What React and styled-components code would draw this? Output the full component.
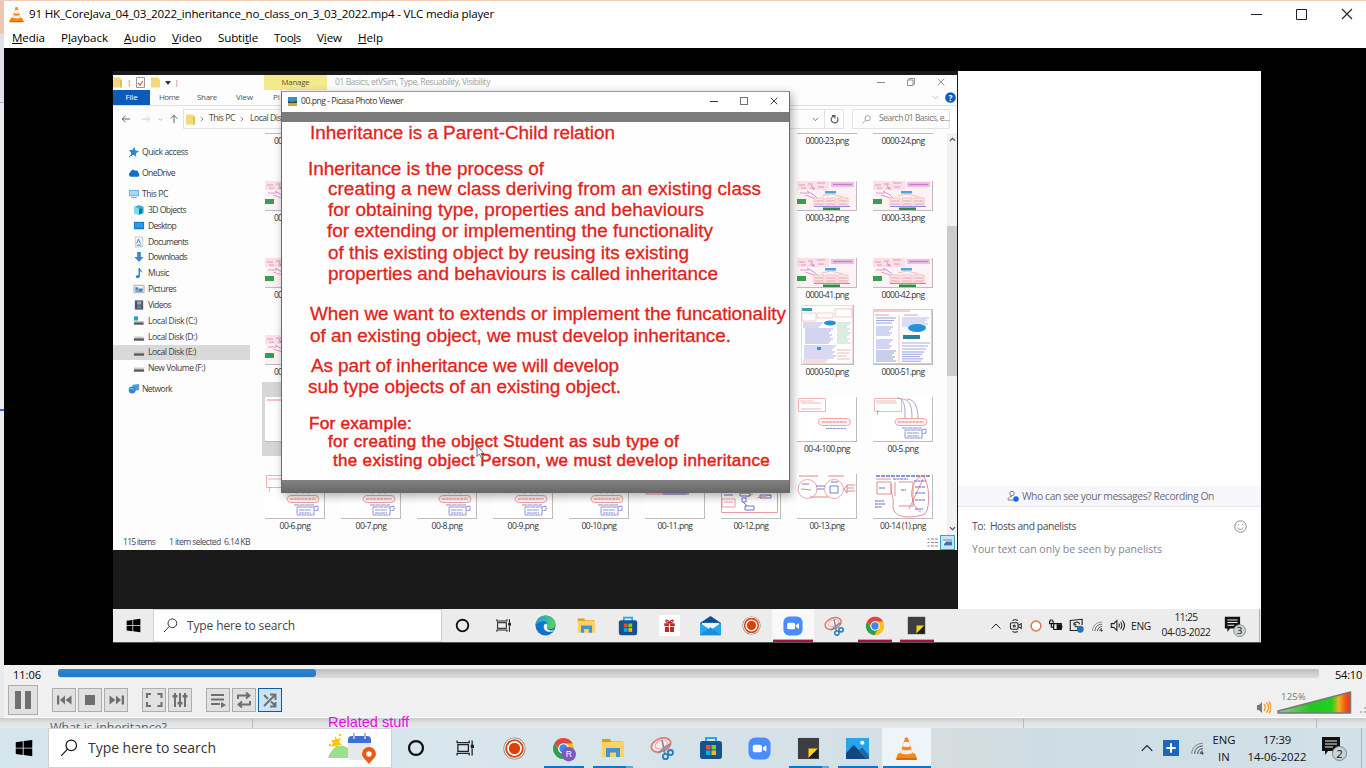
import React, { useLayoutEffect, useRef } from "react";
import styled, { createGlobalStyle } from "styled-components";

const Global = createGlobalStyle`
  * { box-sizing: border-box; }
  body { margin: 0; overflow: hidden; font-family: "Open Sans", "Noto Sans", sans-serif; }
  svg { display: block; flex: none; }
`;

/* ---------- text ---------- */

const LabelBox = styled.span`
  display: block;
  flex: none;
  width: ${(p) => (p.$w ? `${p.$w}px` : "auto")};
  margin-left: ${(p) => p.$ml || 0}px;
  white-space: pre;
  font-size: ${(p) => p.$size || 11.5}px;
  line-height: ${(p) => p.$lh || 14}px;
  color: ${(p) => p.$color || "#000"};
`;

/* Spreads its letters so that the text fills the given width. */
function Label({ w, size, lh, color, ml, children }) {
  const ref = useRef(null);
  useLayoutEffect(() => {
    const el = ref.current;
    if (!el || !w) return;
    el.style.letterSpacing = "0px";
    const natural = el.getBoundingClientRect().width;
    el.style.letterSpacing = `${(w - natural) / Math.max(1, el.textContent.length)}px`;
  }, [w, size]);
  return (
    <LabelBox $w={w} $size={size} $lh={lh} $color={color} $ml={ml}>
      <span ref={ref}>{children}</span>
    </LabelBox>
  );
}

/* ---------- screen ---------- */

const Screen = styled.div`
  width: 1366px;
  height: 768px;
  display: flex;
  flex-direction: column;
  overflow: hidden;
  background: #f6f6f8;
`;
const TopEdge = styled.div`
  height: 1px;
  background: #f3cbb9;
`;
const Upper = styled.div`
  height: 717px;
  display: flex;
`;
const LeftEdge = styled.div`
  width: 4px;
  height: 717px;
  background: linear-gradient(#f0c6b4 0 33px, #dfe1e6 33px 101px, #b4b6bb 101px 102px, #e9eaee 102px 408px, #2b6fc2 408px 410px, #e9eaee 410px);
`;
const Player = styled.div`
  width: 1362px;
  height: 717px;
  display: flex;
  flex-direction: column;
  background: #fff;
`;
const Behind = styled.div`
  height: 10px;
  display: flex;
  background: linear-gradient(#c9cacd, #e4e5e7 60%, #e9e9eb);
`;
const BehindCell = styled.div`
  width: ${(p) => p.$w}px;
  height: 10px;
  flex: none;
  overflow: hidden;
  padding-left: ${(p) => p.$pl || 0}px;
  border-right: 1px solid #b9bbbe;
`;
const RelatedCell = styled.div`
  width: 771px;
  height: 10px;
  flex: none;
  padding-left: 75px;
  border-right: 1px solid #b9bbbe;
  font-family: "Liberation Sans", sans-serif;
  & > span { margin-top: -4px; position: relative; }
`;

/* ---------- player chrome ---------- */

const TitleBar = styled.div`
  height: 27px;
  display: flex;
  align-items: center;
  padding: 0 0 1px 4px;
`;
const TitleButtons = styled.div`
  margin-left: auto;
  display: flex;
  gap: 34px;
  padding-right: 13px;
  align-items: center;
`;
const MenuBar = styled.div`
  height: 20px;
  display: flex;
  align-items: center;
  padding-left: 8px;
`;
const VideoArea = styled.div`
  height: 617px;
  background: #000;
  padding: 23px 0 0 109px;
`;
const SeekRow = styled.div`
  height: 18px;
  display: flex;
  align-items: center;
  padding: 2px 0 0 9px;
  background: #f0f0f0;
`;
const SeekTrack = styled.div`
  width: 1261px;
  height: 9px;
  margin: -3px 16px 0 17px;
  border-radius: 2px;
  background: linear-gradient(#bdbdbd, #dedede);
`;
const SeekFill = styled.div`
  width: 258px;
  height: 8px;
  border-radius: 3px;
  background: linear-gradient(#2b86d8, #2478c6);
`;
const ControlRow = styled.div`
  height: 34px;
  display: flex;
  align-items: center;
  padding-left: 4px;
  background: #f0f0f0;
`;
const ControlGroup = styled.div`
  display: flex;
  gap: 2px;
  margin-left: 14px;
`;
const ControlButton = styled.div`
  width: ${(p) => (p.$big ? 30 : 24)}px;
  height: ${(p) => (p.$big ? 30 : 24)}px;
  display: flex;
  align-items: center;
  justify-content: center;
  border: 1px solid ${(p) => (p.$on ? "#0a5ba8" : "#adadad")};
  background: ${(p) => (p.$on ? "#cce4f7" : "#e1e1e1")};
`;
const Volume = styled.div`
  margin-left: auto;
  height: 34px;
  display: flex;
  align-items: flex-end;
  padding: 0 0 3px 0;
`;
const VolumeScale = styled.div`
  width: 75px;
  height: 24px;
  margin: 0 7px 0 6px;
  display: grid;
  & > * { grid-area: 1 / 1; }
  & > svg { align-self: end; }
`;

/* ---------- recorded desktop ---------- */

const Desktop = styled.div`
  width: 1148px;
  height: 572px;
  display: flex;
  flex-direction: column;
  border-bottom: 1px solid #555;
`;
const DesktopMain = styled.div`
  display: flex;
  height: 538px;
`;
const Shared = styled.div`
  position: relative;
  width: 845px;
  height: 538px;
  background: #1a1a1a;
  padding-top: 4px;
`;
const Explorer = styled.div`
  width: 844px;
  height: 475px;
  background: #fdfdfe;
  display: flex;
  flex-direction: column;
  ${LabelBox} { margin-top: -1px; margin-bottom: 1px; }
`;
const QuickBar = styled.div`
  height: 15px;
  display: flex;
  align-items: center;
`;
const QuickIcons = styled.div`
  width: 151px;
  display: flex;
  align-items: center;
`;
const ManageTab = styled.div`
  width: 63px;
  height: 15px;
  background: #f5e98d;
  display: flex;
  align-items: center;
  justify-content: center;
`;
const Caption = styled.div`
  margin-left: auto;
  display: flex;
  align-items: center;
  gap: 22px;
  padding: 0 12px 1px 0;
`;
const Ribbon = styled.div`
  height: 16px;
  display: flex;
  align-items: center;
  border-bottom: 1px solid #dedede;
`;
const FileTab = styled.div`
  width: 37px;
  height: 15px;
  background: #0b5cb8;
  display: flex;
  align-items: center;
  justify-content: center;
`;
const RibbonEnd = styled.div`
  margin-left: auto;
  display: flex;
  align-items: center;
  gap: 6px;
  padding-right: 1px;
`;
const AddressRow = styled.div`
  height: 27px;
  display: flex;
  align-items: center;
  padding: 0 0 1px 8px;
`;
const AddressBox = styled.div`
  width: 661px;
  height: 20px;
  margin-left: 4px;
  border: 1px solid #e2e2e2;
  display: flex;
  align-items: center;
  padding-left: 2px;
`;
const AddressEnd = styled.div`
  margin-left: auto;
  display: flex;
  align-items: center;
  height: 100%;
`;
const RefreshCell = styled.div`
  width: 19px;
  height: 100%;
  margin-left: 5px;
  border-left: 1px solid #e2e2e2;
  display: flex;
  align-items: center;
  justify-content: center;
`;
const SearchFiles = styled.div`
  width: 98px;
  height: 20px;
  margin-left: 8px;
  border: 1px solid #e2e2e2;
  display: flex;
  align-items: center;
  padding-left: 9px;
`;
const Body = styled.div`
  height: 402px;
  display: flex;
`;
const Nav = styled.div`
  width: 144px;
  padding-top: 11px;
  ${LabelBox} { margin-top: 0; margin-bottom: 0; }
`;
const NavItem = styled.div`
  width: 137px;
  height: 15.85px;
  margin-bottom: ${(p) => p.$gap || 0}px;
  padding-left: ${(p) => (p.$deep ? 20 : 15)}px;
  display: flex;
  align-items: center;
  gap: ${(p) => (p.$deep ? 3 : 2)}px;
  background: ${(p) => (p.$on ? "#d9d9d9" : "transparent")};
`;
const FileGrid = styled.div`
  width: 690px;
  display: grid;
  grid-template-columns: repeat(9, 76px);
  grid-template-rows: 18px repeat(5, 77px);
  overflow: hidden;
`;
const FileCell = styled.div`
  display: flex;
  flex-direction: column;
  align-items: center;
  justify-content: flex-end;
  padding-bottom: 2px;
  overflow: hidden;
  background: ${(p) => (p.$on ? "linear-gradient(90deg, transparent 5px, #d5d6d8 5px) 0 -3px no-repeat" : "none")};
`;
const TileName = styled.div`
  width: ${(p) => (p.$left ? "42px" : "auto")};
  height: 14px;
`;
const Thumb = styled.div`
  width: ${(p) => p.$w || 60}px;
  background: #fff;
  margin-bottom: 1px;
  border-right: 1px solid #bcbcbc;
  border-bottom: 1px solid #bcbcbc;
  flex: none;
`;
const ScrollColumn = styled.div`
  width: 10px;
  height: 402px;
  background: #f1f0f2;
  display: flex;
  flex-direction: column;
  align-items: center;
  justify-content: space-between;
  padding: 3px 0 3px;
`;
const ScrollThumb = styled.div`
  width: 10px;
  height: 150px;
  background: #cbcbcd;
  margin-bottom: 66px;
`;
const StatusRow = styled.div`
  height: 15px;
  display: flex;
  align-items: center;
  padding-left: 10px;
`;
const ViewIcons = styled.div`
  margin-left: auto;
  display: flex;
  align-items: center;
  gap: 2px;
  padding: 0 2px 1px 0;
`;
const ViewOn = styled.div`
  width: 15px;
  height: 15px;
  border: 1px solid #3aa0cf;
  background: #c5e6f5;
  display: flex;
  align-items: center;
  justify-content: center;
`;

/* ---------- photo viewer window ---------- */

const Viewer = styled.div`
  position: absolute;
  left: 168px;
  top: 20px;
  width: 509px;
  height: 402px;
  border: 1px solid #6a6a6a;
  border-top-color: #999;
  box-shadow: 2px 3px 9px rgba(0, 0, 0, 0.32);
  background: #fff;
  display: flex;
  flex-direction: column;
`;
const ViewerTitle = styled.div`
  height: 20px;
  display: flex;
  align-items: center;
  padding: 0 11px 2px 6px;
`;
const ViewerButtons = styled.div`
  margin-left: auto;
  display: flex;
  align-items: center;
  gap: 22px;
`;
const GreyBand = styled.div`
  height: ${(p) => p.$h}px;
  flex: none;
  background: ${(p) => (p.$low ? "linear-gradient(#828282, #686868)" : "#7b7b7b")};
`;
const Slide = styled.div`
  height: 358px;
  flex: none;
  background: #fefefe;
  font-family: "Liberation Sans", sans-serif;
`;
const SlideLine = styled.div`
  padding-top: ${(p) => p.$mt}px;
  padding-left: ${(p) => p.$x - 282}px;
  -webkit-text-stroke: ${(p) => (p.$heavy ? 0.5 : 0.3)}px #e2231a;
`;
const Pointer = styled.div`
  position: absolute;
  left: 363px;
  top: 374px;
`;

/* ---------- chat ---------- */

const Chat = styled.div`
  width: 303px;
  height: 538px;
  background: #fff;
  display: flex;
  flex-direction: column;
  padding-top: 415px;
`;
const ChatNotice = styled.div`
  height: 21px;
  background: #f7f7fb;
  border-bottom: 1px solid #e6e6ee;
  display: flex;
  align-items: center;
  padding-left: 49px;
  gap: 3px;
`;
const ChatRow = styled.div`
  height: ${(p) => p.$h || 24}px;
  margin-top: ${(p) => p.$mt || 0}px;
  display: flex;
  align-items: center;
  justify-content: space-between;
  padding: 0 14px;
`;

/* ---------- task bars ---------- */

const InnerBar = styled.div`
  height: 33px;
  background: #ececec;
  display: flex;
`;
const OuterBar = styled.div`
  height: 40px;
  display: flex;
  background: linear-gradient(90deg, #d5e5ee, #d8e6ec 40%, #d3e1e7 62%, #d5dcde 70%, #cedde4 76%, #d2e0e7);
`;
const Slot = styled.div`
  width: ${(p) => p.$w}px;
  height: 100%;
  flex: none;
  display: flex;
  align-items: center;
  justify-content: center;
  background: ${(p) => p.$bg || "transparent"};
`;
const AppSlot = styled(Slot)`
  display: grid;
  grid-template-rows: 1fr;
  & > * { grid-area: 1 / 1; align-self: center; justify-self: center; }
`;
const Underline = styled.div`
  && { align-self: end; }
  width: ${(p) => p.$w}px;
  height: ${(p) => (p.$pink ? 3 : 2)}px;
  background: ${(p) =>
    p.$pink
      ? "linear-gradient(#f08bb0 0 1px, #a80f49 1px)"
      : p.$split
      ? "linear-gradient(90deg, #0078d7 0 82%, #5ba7e0 82%)"
      : "#0078d7"};
`;
const SearchBox = styled.div`
  width: ${(p) => p.$w}px;
  height: 100%;
  flex: none;
  background: #fff;
  border: 1px solid #ccd1d4;
  display: flex;
  align-items: center;
  padding-left: ${(p) => p.$pl}px;
`;
const Tray = styled.div`
  margin-left: auto;
  display: flex;
  align-items: center;
`;
const TwoLines = styled.div`
  width: ${(p) => p.$w}px;
  margin-left: ${(p) => p.$ml}px;
  display: flex;
  flex-direction: column;
  align-items: center;
  flex: none;
  padding-bottom: 1px;
`;
const DeskEdge = styled.div`
  width: ${(p) => p.$w}px;
  height: 100%;
  border-left: 1px solid #a9b3b8;
`;

/* ---------- icons ---------- */

const Svg = ({ s = 16, w, h, vb = "0 0 24 24", children, ...r }) => (
  <svg width={w || s} height={h || s} viewBox={vb} fill="none" {...r}>{children}</svg>
);
const Cone = ({ s }) => (
  <Svg s={s}>
    <path d="M4 16.5h16l2.500 6H1.500z" fill="#f08a12" />
    <path d="M3.500 21h17l1.500 2H2z" fill="#d86b05" />
    <path d="M10.800 1.500h2.400L18.500 18c-2 2-11 2-13 0z" fill="#f58a1b" />
    <path d="M9.500 5.800h5l1.200 4c-1.800 1-5.600 1-7.400 0z" fill="#f2f2f2" />
    <path d="M7.200 12.800c2.500 1.300 7.100 1.300 9.600 0l1.100 3.400c-3 1.700-8.800 1.700-11.800 0z" fill="#ececec" />
  </Svg>
);
const Win = ({ s, c = "#000" }) => (
  <Svg s={s}><path fill={c} d="M1 4.200 10.300 3v8.500H1zM11.500 2.800 23 1.200v10.300H11.500zM1 12.700h9.300v8.500L1 20zM11.500 12.700H23v10.200l-11.500-1.600z" /></Svg>
);
const Magnifier = ({ s, c = "#222", sw = 1.6 }) => (
  <Svg s={s} stroke={c} strokeWidth={sw}><circle cx="15" cy="8.500" r="7" /><path d="M10 13.500 1.500 22.500" /></Svg>
);
const Ring = ({ s }) => <Svg s={s}><circle cx="12" cy="12" r="9.300" stroke="#111" strokeWidth="3" /></Svg>;
const TaskView = ({ s }) => (
  <Svg s={s} stroke="#222" strokeWidth="1.700">
    <rect x="2.500" y="7.500" width="14" height="9" />
    <path d="M1.500 2v2.700h16V2M1.500 22v-2.700h16V22M21.500 2v6M21.500 13v9" />
    <rect x="20.500" y="8.500" width="2.500" height="3" fill="#111" />
  </Svg>
);
const Recorder = ({ s }) => (
  <Svg s={s}>
    <circle cx="12" cy="12" r="11.500" fill="#8b7d77" /><circle cx="12" cy="12" r="10.700" fill="#fff" />
    <circle cx="12" cy="12" r="8.700" stroke="#cf4a14" strokeWidth="2" /><circle cx="12" cy="12" r="5.900" fill="#d9420b" />
  </Svg>
);
const Chrome = ({ s, badge }) => (
  <Svg s={s} style={{ overflow: "visible" }}>
    <path fill="#e0473c" d="M12 7H21.800A11 11 0 0 0 2.500 6.500L7.670 14.500A5 5 0 0 1 12 7Z" />
    <path fill="#fbc116" d="M21.800 7A11 11 0 0 1 11.500 23L16.330 14.500A5 5 0 0 0 12 7Z" />
    <path fill="#2da04e" d="M2.500 6.500A11 11 0 0 0 11.500 23L16.330 14.500A5 5 0 0 1 7.670 14.500Z" />
    <circle cx="12" cy="12" r="5.600" fill="#fff" /><circle cx="12" cy="12" r="4.400" fill="#4284f3" />
    {badge && (
      <g>
        <circle cx="17.500" cy="18" r="7.500" fill="#7e57c2" />
        <text x="17.500" y="21.300" fontSize="9" fill="#fff" textAnchor="middle" fontFamily="Liberation Sans">R</text>
      </g>
    )}
  </Svg>
);
const Folder = ({ s }) => (
  <Svg s={s}>
    <path d="M1 3h8l1.500 2.500H22V8H1z" fill="#dc9b12" /><path d="M1 6h22v15H1z" fill="#fdd262" />
    <path d="M5 12h14v9h-4v-4.500H9V21H5z" fill="#3f94d5" />
  </Svg>
);
const Snip = ({ s }) => (
  <Svg s={s}>
    <ellipse cx="11" cy="9" rx="10" ry="6.500" transform="rotate(-22 11 9)" stroke="#de7b78" strokeWidth="1.800" fill="#f8edee" />
    <ellipse cx="11.500" cy="8.500" rx="6.500" ry="3.800" transform="rotate(-22 11 9)" stroke="#e9a5a3" strokeWidth="1" />
    <path d="M12 4l3 14M20 8 8 17" stroke="#7f8f9c" strokeWidth="1.700" />
    <circle cx="15.500" cy="20.500" r="2.600" stroke="#2481c6" strokeWidth="1.900" /><circle cx="20.500" cy="16.500" r="2.500" stroke="#2481c6" strokeWidth="1.900" />
  </Svg>
);
const Store = ({ s }) => (
  <Svg s={s}>
    <path d="M7 6V2h10v4" stroke="#24a8ea" strokeWidth="2" /><rect x="1" y="5" width="22" height="18" rx="2.500" fill="#16528f" />
    <path fill="#f1511b" d="M7 9h4.500v4.500H7z" /><path fill="#80cc28" d="M12.500 9H17v4.500h-4.500z" />
    <path fill="#00adef" d="M7 14.500h4.500V19H7z" /><path fill="#fbbc09" d="M12.500 14.500H17V19h-4.500z" />
  </Svg>
);
const ZoomApp = ({ s }) => (
  <Svg s={s}><rect x="0.500" y="0.500" width="23" height="23" rx="7" fill="#4a8cfb" /><rect x="5" y="8" width="9.500" height="8" rx="2" fill="#fff" /><path d="m15.500 11 3.700-2.500v7L15.500 13z" fill="#fff" /></Svg>
);
const Sticky = ({ s }) => (
  <Svg s={s}><path d="M1 1h22v22H1z" fill="#3c3e40" /><path d="M12 12h10L12 22z" fill="#ffd60a" /><path d="M22 12v10H12z" fill="#1e1e1e" /></Svg>
);
const Photos = ({ s }) => (
  <Svg s={s}><path d="M0 1h24v22H0z" fill="#27a5ea" /><path d="m0 17 8-9 14 15H0z" fill="#15467f" /><path d="m13 14 4-3 7 8v4h-3z" fill="#1f66a6" /><circle cx="17" cy="6" r="2.200" fill="#fff" /></Svg>
);
const Edge = ({ s }) => (
  <Svg s={s}>
    <defs>
      <linearGradient id="edgeTop" x1="0" y1="0" x2="1" y2="0.300"><stop offset="0" stopColor="#1a9fe0" /><stop offset="1" stopColor="#57ce62" /></linearGradient>
    </defs>
    <circle cx="12" cy="12" r="11.500" fill="#1272c9" />
    <path d="M.5 12C1 4.500 6 .5 12 .5c7 0 11.500 5 11.500 9.500 0 4-3 6-6 6-2.800 0-4.300-1-3.500-2.200C16 10 12.500 6.800 9 7 5 7.200 1.500 9.500.5 12z" fill="url(#edgeTop)" />
    <path d="M11 10.500c-2.500 3-.5 8 4.500 8.700 3 .3 5.500-.6 7-2.200-3 1.500-7 1-8.500-1.500-1-1.500.6-2.500.4-3.800-.3-1.500-2.200-2.400-3.400-1.200z" fill="#e9f5fb" />
  </Svg>
);
const Gift = ({ s }) => (
  <Svg s={s}><path fill="#fff" d="M0 0h24v24H0z" /><path fill="#b92a22" d="M6 9.500h5.400v3H6zM12.600 9.500H18v3h-5.400zM6.800 13.500h4.600v6H6.800zM12.600 13.500h4.600v6h-4.600z" /><path d="M12 9c-1.500-4-5-4-4-1.500C8.500 8.500 10 9 12 9c2 0 3.500-.5 4-1.500C17 5 13.500 5 12 9z" stroke="#b92a22" strokeWidth="1.400" /></Svg>
);
const Mail = ({ s }) => (
  <Svg s={s}><path d="M0 9 12 1l12 8v3H0z" fill="#0c4f92" /><path d="M2 9h20v10H2z" fill="#e9f5fc" /><path d="M0 9v14h24V9l-12 8z" fill="#28a4ea" /><path d="m0 23 12-9 12 9z" fill="#1c8fdb" /></Svg>
);
const Wifi = ({ s }) => (
  <Svg s={s} stroke="#444" strokeWidth="1.700">
    <path d="M3 22C3 12 11 4 22 4" opacity=".6" /><path d="M8 22c0-8 6-13.500 14-13.500M13 22c0-5 4-9 9-9M17.500 22c0-3 2-5 4.500-5" /><circle cx="21" cy="21" r="1.500" fill="#444" />
  </Svg>
);
const Up = ({ s, c = "#222", r = 0, sw = 2 }) => <Svg s={s} stroke={c} strokeWidth={sw}><path d="m3 17 9-9 9 9" transform={`rotate(${r} 12 12)`} /></Svg>;
const Notice = ({ s, n }) => (
  <Svg s={s} vb="0 0 26 26">
    <path d="M1 2h18v14H7l-3 4v-4H1z" fill="#111" /><path d="M4 6h12M4 9h12M4 12h8" stroke="#e8eef0" strokeWidth="1.200" />
    <circle cx="18.500" cy="18.500" r="7" fill="#cdd2d4" stroke="#7c8386" />
    <text x="18.500" y="22.500" fontSize="11.500" textAnchor="middle" fill="#111" fontFamily="Open Sans">{n}</text>
  </Svg>
);
const Speaker = ({ s, c = "#222" }) => (
  <Svg s={s} stroke={c} strokeWidth="1.700"><path d="M2 9h4l5-5v16l-5-5H2zM14 9c1.300 2 1.300 4 0 6M17 6.500c2.500 3.500 2.500 7.500 0 11M20 4c4 5 4 11 0 16" /></Svg>
);
const FolderMini = ({ w = 9, h = 11 }) => (
  <Svg w={w} h={h} vb="0 0 9 11"><path d="M0 .5h7L9 3v7.500H0z" fill="#f6d878" /><path d="M7 3h2v7.500H7z" fill="#e9bd4f" /></Svg>
);
const Arrow = ({ r = 0, c = "#555" }) => <Svg s={10} stroke={c} strokeWidth="2.200"><path d="M22 12H3m8-8-8 8 8 8" transform={`rotate(${r} 12 12)`} /></Svg>;
const Close = ({ s, c = "#222", sw = 1 }) => <Svg s={s} vb="0 0 12 12" stroke={c} strokeWidth={sw}><path d="m1 1 10 10M11 1 1 11" /></Svg>;
const Square = ({ s, c = "#222" }) => <Svg s={s} vb="0 0 11 11" stroke={c}><path d="M.5.5h10v10H.5z" /></Svg>;
const Dash = ({ w, c = "#222" }) => <Svg w={w} h={1} vb="0 0 10 1" preserveAspectRatio="none"><path d="M0 0h10v1H0z" fill={c} /></Svg>;

const navArt = {
  star: <g><path d="m13 1 2 8 8 1-7 5 1 8-6-5-7 4 2-8-5-6 8-1z" fill="#2f86cc" /><path d="m1 23 6-6" stroke="#5a6d7c" strokeWidth="2" /></g>,
  cloud: <path d="M5 20a5 5 0 0 1-1-9.500C5 5 11 3 14.500 7c5-1 7 2 7 5 3 1 3 8-1.500 8z" fill="#0f6fc6" />,
  pc: <g><path d="M1 3h22v14H1z" fill="#6aaee0" /><path d="M3 5h18v10H3z" fill="#a9d6f2" /><path d="M6 19h12v2H6z" fill="#7d97a8" /></g>,
  cube: <g><path d="M2 5 12 1l10 4v14l-10 4-10-4z" fill="#35b4d6" /><path d="M8 9h11v11H8z" fill="#127a9e" /><path d="m2 5 10 4v14L2 19z" fill="#7fdcf0" /></g>,
  desk: <g><path d="M1 3h22v16H1z" fill="#1475c9" /><path d="M3 5h18v11H3z" fill="#2b9aef" /></g>,
  doc: <g><path d="M4 1h16v22H4z" fill="#eef4f8" stroke="#90a4b1" /><path d="m7 15 4-9 4 9M7 19h10" stroke="#3d7fae" strokeWidth="2" /></g>,
  down: <path d="M8 1h8v11h6L12 23 2 12h6z" fill="#3d86cf" />,
  music: <path d="M11 1h3c0 5 6 5 5 11-1-3-3-4-5-4v11c0 5-9 5-9 1 0-3 3-4 6-3z" fill="#1d84dd" />,
  pic: <g><path d="M1 4h22v16H1z" fill="#eef3f6" stroke="#8393a0" strokeWidth="1.500" /><path d="M4 8h6v6H4zM11 11h9v4h-9zM4 15h16v3H4z" fill="#4b83b3" /></g>,
  video: <g><path d="M3 2h18v20H3z" fill="#4e545b" /><path d="M8 4h9v7H8z" fill="#8fa9bd" /><path d="M8 13h9v7H8z" fill="#6482a0" /></g>,
  diskc: <g><path d="M1 2h9v9H1z" fill="#26a2d8" /><path d="M1 12h21v3H1z" fill="#c1c4c6" /><path d="M1 15h21v5H1z" fill="#56595c" /></g>,
  disk: <g><path d="M2 11h19l2 4H1z" fill="#c9cccd" /><path d="M1 15h22v5H1z" fill="#55585b" /></g>,
  net: <g><path d="M9 3 23 1v13L9 17z" fill="#4c9fd6" /><circle cx="8" cy="14" r="7.500" fill="#3286c6" /><path d="M3 12c4-2 7-1 9 2" stroke="#a6d8f4" strokeWidth="2" /></g>,
};

const nav = [
  ["star", "Quick access", 46, false, 5.2],
  ["cloud", "OneDrive", 33, false, 5.2],
  ["pc", "This PC", 26, false],
  ["cube", "3D Objects", 38, true],
  ["desk", "Desktop", 28, true],
  ["doc", "Documents", 40, true],
  ["down", "Downloads", 39, true],
  ["music", "Music", 21, true],
  ["pic", "Pictures", 28, true],
  ["video", "Videos", 23, true],
  ["diskc", "Local Disk (C:)", 49, true],
  ["disk", "Local Disk (D:)", 49, true],
  ["disk", "Local Disk (E:)", 48, true],
  ["disk", "New Volume (F:)", 57, true, 5.2],
  ["net", "Network", 30, false],
];

/* ---------- thumbnails ---------- */

const rows = (x, y, w, n, step, c) =>
  Array.from({ length: n }, (_, i) => (
    <path key={`${x}-${y}-${i}`} d={`M${x} ${y + i * step}h${w - ((i * 7) % 5)}`} stroke={c} strokeWidth="1.100" opacity=".62" />
  ));

const art = {
  pink: [29, <g>
    <path d="M0 0h59v29H0z" fill="#fdf3f6" /><path d="M0 0h32v9H0z" fill="#fbe0e5" /><path d="M34 1h23v5H34z" fill="#efbde5" /><path d="M36 3.500h19" stroke="#c87dd0" strokeWidth="1.300" />
    <path d="M2 4h6M4 7h5M11 3h5M13 7h5M20 2h8M21 6h6M3 12h9M8 14l12 4" stroke="#dd92b2" strokeWidth=".9" /><path d="m14 4 3 5M10 10l7 4 5 5" stroke="#9b7be0" strokeWidth=".7" />
    <path d="M28 10h11v2.500H28z" fill="#4ba6db" /><path d="M0 18h9v5H0z" fill="#35a04f" /><path d="M26 26.500h17v2.500H26z" fill="#2f8c49" />
    <path d="M17 17h10v8H17zM29 17h10v8H29zM41 17h10v8H41z" stroke="#f0b0ac" strokeWidth=".7" fill="#fce9e9" /><path d="M18 20h8M30 20h8M42 20h8M18 23h8M30 23h8M42 23h8" stroke="#df98a8" strokeWidth=".9" /><path d="M17 25.500h36" stroke="#9a8ce2" strokeWidth="1.100" />
    <path d="m25 15 9-2 12 3" stroke="#e99" strokeWidth=".6" />
  </g>],
  pinkEdge: [2, <path d="M0 0h59v2H0z" fill="#fdfdfd" />],
  doc50: [59, <g>
    <path d="M.5.500h51v58H.5z" stroke="#f4c4c8" strokeWidth=".7" /><path d="M1 3h10v3H1z" fill="#38a2aa" /><path d="M1 8h14v8H1zM16 8h16v5H16zM34 4h17v8H34z" stroke="#efadad" strokeWidth=".6" />
    {rows(2, 18, 20, 3, 2, "#9892dc")}{rows(4, 24, 28, 8, 2, "#7c82da")}{rows(3, 41, 32, 7, 2, "#928fe0")}{rows(36, 18, 14, 11, 2, "#98cca1")}{rows(36, 45, 14, 4, 3, "#e99aa0")}{rows(2, 55, 25, 2, 2, "#e39aa8")}
    <ellipse cx="29" cy="18" rx="6" ry="2.500" fill="#2590d7" /><path d="M16 42h4v3h-4z" fill="#2e9dc0" />
  </g>],
  doc51: [55, <g>
    <path d="M.5.500h58v54H.5zM26 6v49" stroke="#efb2b6" strokeWidth=".8" /><path d="M1 2h36M2 6h14M31 6h14" stroke="#e89ba3" />
    {rows(3, 9, 20, 3, 2.500, "#6670cd")}{rows(3, 18, 17, 5, 2, "#7b85d8")}{rows(3, 31, 17, 5, 2, "#7b85d8")}{rows(3, 42, 20, 6, 2, "#6670cd")}{rows(29, 9, 27, 5, 2, "#8e9ade")}{rows(29, 34, 28, 3, 3, "#7b85d8")}{rows(29, 43, 22, 5, 2.300, "#6670cd")}
    <ellipse cx="44" cy="19" rx="9" ry="4" fill="#1f94d6" /><path d="M30 26h17v4H30z" fill="#26849c" />
  </g>],
  d4: [44, <g><path d="M1.500 1.500h27v13h-27zM3 4h13M4 6h20M4 12h20" stroke="#ec9a98" strokeWidth=".7" /><path d="M21.500 25a5 3.500 0 0 1 4-3.500h24a4 3.500 0 0 1 0 7h-24a5 3.500 0 0 1-4-3.500z" stroke="#ec8d8b" fill="#fff3f3" strokeWidth=".8" /><path d="M25 25h25" stroke="#df7875" strokeWidth="1.200" strokeDasharray="3 .6" /><path d="M29 31.500h20" stroke="#8c95de" strokeDasharray="3 .6" /></g>],
  d5: [44, <g><path d="M1.500 1.500h27v13h-27zM3 4h20M4 6h20" stroke="#ec9a98" strokeWidth=".7" /><path d="M24 1c8 0 8 10 8 20M29 2c8 0 10 8 10 19M34 2c8 0 11 9 11 19M5 13l-1 5" stroke="#7e83c8" strokeWidth=".7" /><path d="M22 25a5 3.500 0 0 1 4-3.500h24a4 3.500 0 0 1 0 7H26a5 3.500 0 0 1-4-3.500z" stroke="#ec8d8b" fill="#fff3f3" strokeWidth=".8" /><path d="M25 25h26" stroke="#df7875" strokeWidth="1.200" strokeDasharray="3 .6" /><path d="M29 31h20M32 33h17v8H32zM34 36h12M34 39h12M49 33l4-1v4l-4 1" stroke="#6a73d2" strokeWidth=".8" strokeDasharray="5 .4" /></g>],
  d13: [44, <g><circle cx="10.500" cy="15" r="9.500" stroke="#e58f90" strokeWidth=".8" /><circle cx="37" cy="15" r="9.500" stroke="#e58f90" strokeWidth=".8" /><path d="M2 2h19M31 2h16M4 15l10 1M13 23h18M50 11h8M50 14h7M50 17h8M47 15l3-4v8z" stroke="#e2787b" strokeWidth=".9" /><path d="M5 10h7M19 12h9M20 15h7M34 8h7M33 12h8v7h-8z" stroke="#6870c4" strokeWidth=".9" /></g>],
  d14: [44, <g><path d="M3 2h54" stroke="#6870c4" strokeWidth="1.500" strokeDasharray="4 1" /><path d="M3 5h15M4 8h14v12H4zM22 8v14M26 8h14v24H26M18 10c0 15 3 10 2 22 0 14 22 12 32 8 6-8 4-30-1-37-6-3-14 10-12 20s6 14 9 15M36 35 50 5" stroke="#df7278" strokeWidth=".8" /><path d="M41 7h12M42 13h10M42 19h10M42 26h10M42 35h8M2 27h9M2 30h10M2 33h7M6 14h6M28 16h5M20 5h15" stroke="#6268c0" strokeWidth="1.200" strokeDasharray="3 .5" /></g>],
  d11: [44, <g><path d="M1 14h40v6H1z" stroke="#e78f94" fill="#fff4f6" /><path d="M1 17h57M18 20h26M42 18h16" stroke="#737bd6" strokeWidth="1.200" /></g>],
  d12: [44, <g><path d="M.5 16v22.500h56V14M1 25h13v8H1zM3 28h9M24 24l8-4M36 24l14-3" stroke="#e58288" strokeWidth=".8" /><path d="M3 21h9M19 19h10v3H19zM21 24h4v4h-4zM39 21h11v3H39zM24 32h9v4h-9zM22 28l4 4" stroke="#5d66cd" strokeWidth=".9" /></g>],
  dot: [44, <g><path d="M1.500 1.500h27v12h-27zM3 5h20" stroke="#ec9a98" strokeWidth=".8" /><path d="M5 13l-1 5M32 2v18M38 2v18M44 2v18" stroke="#a79bc8" strokeWidth=".7" /><path d="M22 25a5 3.500 0 0 1 4-3.500h24a4 3.500 0 0 1 0 7H26a5 3.500 0 0 1-4-3.500z" stroke="#ec8d8b" fill="#fff3f3" strokeWidth=".8" /><path d="M25 25h26" stroke="#df7875" strokeWidth="1.200" strokeDasharray="3 .6" /><path d="M29 31h20M32 33h17v8H32zM34 36h12M34 39h12M49 33l4-1v4l-4 1" stroke="#6a73d2" strokeWidth=".8" strokeDasharray="5 .4" /></g>],
  blank: [44, <path d="M2 3h27" stroke="#ef9ba5" strokeWidth="1.200" />],
};

const files = [
  ["00", "pinkEdge", 8], null, null, null, null, null, null, ["0000-23.png", "pinkEdge"], ["0000-24.png", "pinkEdge"],
  ["00", "pink", 8], null, null, null, null, null, null, ["0000-32.png", "pink"], ["0000-33.png", "pink"],
  ["00", "pink", 8], null, null, null, null, null, null, ["0000-41.png", "pink"], ["0000-42.png", "pink"],
  ["00", "pink", 8], null, null, null, null, null, null, ["0000-50.png", "doc50"], ["0000-51.png", "doc51"],
  ["", "blank", 0, true], null, null, null, null, null, null, ["00-4-100.png", "d4", 46], ["00-5.png", "d5", 31],
  ["00-6.png", "dot", 31], ["00-7.png", "dot", 31], ["00-8.png", "dot", 31], ["00-9.png", "dot", 31], ["00-10.png", "dot", 35],
  ["00-11.png", "d11", 35], ["00-12.png", "d12", 35], ["00-13.png", "d13", 35], ["00-14 (1).png", "d14", 46],
];

function FileTile({ file }) {
  if (!file) return <FileCell />;
  const [name, kind, w = 43, on] = file;
  const [h, drawing] = art[kind];
  const tw = kind === "doc50" ? 53 : 60;
  return (
    <FileCell $on={on}>
      <Thumb $w={tw}><Svg w={tw - 1} h={h} vb={`0 0 ${tw - 1} ${h}`}>{drawing}</Svg></Thumb>
      <TileName $left={name === "00"}><Label w={w} size={8.6} color="#333">{name}</Label></TileName>
    </FileCell>
  );
}

const slide = [
  [2, 310, 305, "Inheritance is a Parent-Child relation"],
  [18, 308, 236, "Inheritance is the process of"],
  [2, 328, 433, "creating a new class deriving from an existing class"],
  [3, 328, 376, "for obtaining type, properties and behaviours"],
  [3, 327, 386, "for extending or implementing the functionality"],
  [4, 328, 361, "of this existing object by reusing its existing"],
  [3, 328, 390, "properties and behaviours is called inheritance"],
  [22, 310, 476, "When we want to extends or implement the funcationality"],
  [4, 310, 421, "of an existing object, we must develop inheritance."],
  [12, 311, 308, "As part of inheritance we will develop"],
  [3, 308, 313, "sub type objects of an existing object."],
  [18, 309, 103, "For example:", 17.3, true],
  [1, 328, 351, "for creating the object Student as sub type of", 17, true],
  [1, 333, 437, "the existing object Person, we must develop inheritance", 17, true],
];

const menus = [
  [33, 0, <><u>M</u>edia</>], [47, 16, <>P<u>l</u>ayback</>], [32, 16, <><u>A</u>udio</>], [30, 16, <><u>V</u>ideo</>],
  [40, 16, <>Subti<u>t</u>le</>], [27, 16, <>Too<u>l</u>s</>], [25, 16, <>V<u>i</u>ew</>], [25, 16, <><u>H</u>elp</>],
];

const G = "#6f6f6f";
const control = {
  prev: <g fill={G}><path d="M1 3.500h2.300v9H1zM9 3.500v9L4 8zM15.500 3.500v9L9.500 8z" /></g>,
  stop: <path d="M3 3h10v10H3z" fill={G} />,
  next: <g fill={G}><path d="M13.700 3.500H16v9h-2.300zM8 3.500v9L13 8zM1.500 3.500v9l6-4.500z" /></g>,
  full: <path d="M1 6V2h4M11.500 2h4v4M15.500 10v4h-4M5 14H1v-4" stroke={G} strokeWidth="2" />,
  eq: <g fill={G}><path d="M2 1h2v14H2zM7 1h2v14H7zM12 1h2v14h-2zM.5 3h5v2.500h-5zM5.500 10h5v2.500h-5zM10.500 3h5v2.500h-5z" /></g>,
  list: <g fill={G}><path d="M1 2h13v2H1zM1 6.500h13v2H1zM1 11h9v2H1zM11 10l5 3-5 3z" /></g>,
  loop: <path d="M2 7V3.500h11M10 .5l3.500 3-3.500 3M14 9v3.500H3M6 9.500l-3.500 3 3.500 3" stroke={G} strokeWidth="1.900" />,
  shuffle: <path d="M2 14 13 3M8 2.500h5.500V8M2 3l4 4M9 9.500l4.500 4.500M8 14.500h5.500V10" stroke={G} strokeWidth="1.900" />,
};
const Ctl = ({ name, on }) => (
  <ControlButton $on={on}><Svg s={17} vb="0 0 17 17">{control[name]}</Svg></ControlButton>
);

function ExplorerWindow() {
  return (
    <Explorer>
      <QuickBar>
        <QuickIcons>
          <FolderMini />
          <Label size={8} ml={5} color="#777">|</Label>
          <Svg w={9} h={11} vb="0 0 9 11" style={{ marginLeft: 5 }}><path d="M.5.500h8v10h-8z" fill="#fff" stroke="#999" /><path d="m2 6 2 2 3-4" stroke="#e2553c" strokeWidth="1.200" /></Svg>
          <Svg w={15} h={11} vb="-6 0 15 11"><path d="M0 .5h7L9 3v7.500H0z" fill="#f6d878" /></Svg>
          <Svg w={11} h={6} vb="-5 0 11 6"><path d="M0 1h6L3 5z" fill="#333" /></Svg>
          <Label size={8} ml={3} color="#777">|</Label>
        </QuickIcons>
        <ManageTab><Label w={28} size={7.8} color="#5a5532">Manage</Label></ManageTab>
        <Label w={155} size={8.6} ml={8} color="#a2a2a2">01 Basics, etVSim, Type, Resuability, Visibility</Label>
        <Caption>
          <Dash w={8} c="#888" />
          <Svg s={8} vb="0 0 8 8" stroke="#777" strokeWidth=".8"><path d="M.5 2h5.500v5.500H.5zM2 2V.5h5.500V6H6" /></Svg>
          <Close s={8} c="#777" sw={1.2} />
        </Caption>
      </QuickBar>
      <Ribbon>
        <FileTab><Label w={12} size={8} color="#fff">File</Label></FileTab>
        <Label w={20} size={8} ml={9} color="#555">Home</Label>
        <Label w={20} size={8} ml={18} color="#555">Share</Label>
        <Label w={17} size={8} ml={19} color="#555">View</Label>
        <Label size={8} ml={20} color="#555">Pi</Label>
        <RibbonEnd>
          <Up s={7} r={180} c="#999" />
          <Svg s={11} vb="0 0 12 12"><circle cx="6" cy="6" r="5.800" fill="#0b62bb" /><text x="6" y="9.300" textAnchor="middle" fontSize="9" fill="#fff" fontWeight="bold" fontFamily="Open Sans">?</text></Svg>
        </RibbonEnd>
      </Ribbon>
      <AddressRow>
        <Arrow /><Slot $w={10} /><Arrow r={180} c="#ccc" /><Slot $w={18}><Up s={5} r={180} c="#888" sw={3} /></Slot><Arrow r={90} />
        <AddressBox>
          <FolderMini w={9} h={11} />
          <Slot $w={14}><Up s={6} r={90} c="#666" sw={3} /></Slot>
          <Label w={26} size={8.6} color="#444">This PC</Label>
          <Slot $w={14}><Up s={6} r={90} c="#666" sw={3} /></Slot>
          <Label w={31} size={8.6} ml={1} color="#444">Local Dis</Label>
          <AddressEnd>
            <Up s={7} r={180} c="#666" sw={3} />
            <RefreshCell><Svg s={9} stroke="#555" strokeWidth="3"><path d="M19 6a9 9 0 1 1-7-3M5 1h8v8" /></Svg></RefreshCell>
          </AddressEnd>
        </AddressBox>
        <SearchFiles><Magnifier s={9} c="#888" sw={2} /><Label w={70} size={8.6} ml={8} color="#777">Search 01 Basics, e...</Label></SearchFiles>
      </AddressRow>
      <Body>
        <Nav>
          {nav.map(([icon, text, w, deep, gap]) => (
            <NavItem key={text} $deep={deep} $gap={gap} $on={text.includes("(E:)")}>
              <Svg s={12} vb="-1 -1 26 26">{navArt[icon]}</Svg>
              <Label w={w} size={8.6} color="#3c3c3c">{text}</Label>
            </NavItem>
          ))}
        </Nav>
        <FileGrid>{files.map((f, i) => <FileTile key={i} file={f} />)}</FileGrid>
        <ScrollColumn><Up s={7} c="#444" sw={3.5} /><ScrollThumb /><Up s={7} r={180} c="#444" sw={3.5} /></ScrollColumn>
      </Body>
      <StatusRow>
        <Label w={32} size={8.6} color="#3d4a66">115 items</Label>
        <Label w={81} size={8.6} ml={14} color="#3d4a66">1 item selected  6.14 KB</Label>
        <ViewIcons>
          <Svg w={11} h={9} vb="0 0 11 9" stroke="#888"><path d="M.5 1h2M.5 4.500h2M.5 8h2M4 1h3M4 4.500h3M4 8h3M8 1h3M8 4.500h3M8 8h3" /></Svg>
          <ViewOn><Svg w={9} h={7} vb="0 0 9 7"><path d="M0 0h9v7H0z" fill="#fff" /><path d="M0 1h9M3 3h6v3H1z" stroke="#3b75aa" fill="#3b75aa" /></Svg></ViewOn>
        </ViewIcons>
      </StatusRow>
    </Explorer>
  );
}

function PhotoViewer() {
  return (
    <Viewer>
      <ViewerTitle>
        <Svg s={9} vb="0 0 9 9"><path d="M0 0h9v9H0z" fill="#3a8cc7" /><path d="M0 5h9v4H0z" fill="#d3a63c" /><path d="m0 4 4 1 5-1v2H0z" fill="#334d3c" /></Svg>
        <Label w={102} size={8.6} ml={4} color="#333">00.png - Picasa Photo Viewer</Label>
        <ViewerButtons><Dash w={8} c="#333" /><Square s={8} c="#222" /><Close s={8} c="#222" sw={1.3} /></ViewerButtons>
      </ViewerTitle>
      <GreyBand $h={10} />
      <Slide>
        {slide.map(([mt, x, w, text, size = 18.9, heavy]) => (
          <SlideLine key={text} $mt={mt} $x={x} $heavy={heavy}>
            <Label w={w} size={size} lh={18} color="#e2231a">{text}</Label>
          </SlideLine>
        ))}
      </Slide>
      <GreyBand $h={12} $low />
    </Viewer>
  );
}

const innerApps = [
  [Edge, 21], [Folder, 19], [Store, 20], [Gift, 21], [Mail, 21], [Recorder, 19], [ZoomApp, 20, 40, "#f8f8f8"], [Snip, 20], [Chrome, 20, 34], [Sticky, 19, 34],
];
const outerApps = [
  [Recorder, 23], [Chrome, 23, 40], [Folder, 24, 40, null, true], [Snip, 24], [Store, 24], [ZoomApp, 23], [Sticky, 23, 40, null, true], [Photos, 23, 40], [Cone, 25, 48, "#eef4f7"],
];

export default function App() {
  return (
    <Screen>
      <Global />
      <TopEdge />
      <Upper>
        <LeftEdge />
        <Player>
          <TitleBar>
            <Cone s={17} />
            <Label w={465} size={11.6} ml={4}>91 HK_CoreJava_04_03_2022_inheritance_no_class_on_3_03_2022.mp4 - VLC media player</Label>
            <TitleButtons><Dash w={11} /><Square s={11} /><Close s={12} sw={1.1} /></TitleButtons>
          </TitleBar>
          <MenuBar>
            {menus.map(([w, ml, text], i) => <Label key={i} w={w} ml={ml} size={11.6}>{text}</Label>)}
          </MenuBar>
          <VideoArea>
            <Desktop>
              <DesktopMain>
                <Shared>
                  <ExplorerWindow />
                  <PhotoViewer />
                  <Pointer><Svg w={9} h={14} vb="0 0 9 14"><path d="M1 1v10.500L3.500 9l2 4 1.500-1-2-3.500H8z" fill="#fff" stroke="#444" strokeWidth=".8" /></Svg></Pointer>
                </Shared>
                <Chat>
                  <ChatNotice>
                    <Svg s={12} stroke="#777" strokeWidth="1.800"><circle cx="10" cy="7" r="4.500" /><path d="M14 20H2c0-5 4-7 8-7" /><circle cx="18" cy="18" r="5.500" fill="#0b6ee8" stroke="none" /></Svg>
                    <Label w={192} size={10.3} color="#6c6c78">Who can see your messages? Recording On</Label>
                  </ChatNotice>
                  <ChatRow $mt={7}>
                    <Label w={104} size={10.3} color="#4c4c56">To:  Hosts and panelists</Label>
                    <Svg s={13} stroke="#777" strokeWidth="1.600"><circle cx="12" cy="12" r="10.500" /><path d="M7 14c1.500 4.500 8.500 4.500 10 0M8 7.500v2M16 7.500v2" /></Svg>
                  </ChatRow>
                  <ChatRow $h={22}><Label w={190} size={10.5} color="#858594">Your text can only be seen by panelists</Label></ChatRow>
                </Chat>
              </DesktopMain>
              <InnerBar>
                <Slot $w={40}><Win s={15} /></Slot>
                <SearchBox $w={289} $pl={9}><Magnifier s={15} c="#333" /><Label w={108} size={12} ml={9} lh={18} color="#444">Type here to search</Label></SearchBox>
                <Slot $w={41}><Ring s={15} /></Slot>
                <Slot $w={41}><TaskView s={15} /></Slot>
                <Slot $w={0.8} />
                {innerApps.map(([Icon, s, u, bg], i) => (
                  <AppSlot key={i} $w={41.25} $bg={bg}><Icon s={s} />{u && <Underline $w={u} $pink />}</AppSlot>
                ))}
                <Tray>
                  <Up s={12} />
                  <Slot $w={28}><Svg s={14} stroke="#222" strokeWidth="1.800"><path d="M6 2.500c3-1.500 6-1.500 9 0M6 21.500c3 1.500 6 1.500 9 0" /><rect x="2.500" y="6.500" width="13" height="11" rx="2" /><path d="m16 11 5-3v8l-5-3" /><circle cx="9" cy="12" r="1.800" /></Svg></Slot>
                  <Slot $w={12}><Svg s={12}><circle cx="12" cy="12" r="9.800" fill="#fff" stroke="#dd7a4b" strokeWidth="3" /></Svg></Slot>
                  <Slot $w={28}><Svg s={14} stroke="#111" strokeWidth="2"><path d="M7 8h14v10H8V8M22 11v4" /><path d="M14 10h6v6h-6z" fill="#111" /><path d="M1 3v5h6V3M2.500 1v3M5.500 1v3M4 8v6h4" /></Svg></Slot>
                  <Slot $w={13}><Svg s={15} stroke="#222" strokeWidth="1.800"><path d="M14 20H2V4l19-2v9M8 9c5-5 9-1 9 1M8 7v4h4M15 14H9" /><circle cx="18" cy="18" r="5.500" fill="#2670bd" stroke="none" /></Svg></Slot>
                  <Slot $w={28}><Wifi s={12} /></Slot>
                  <Slot $w={12}><Speaker s={15} /></Slot>
                  <Label w={20} size={10.2} ml={8} color="#222">ENG</Label>
                  <TwoLines $w={50} $ml={10}><Label w={23} size={10.2} lh={15} color="#222">11:25</Label><Label w={49} size={10.2} lh={15} color="#222">04-03-2022</Label></TwoLines>
                  <Slot $w={48}><Notice s={22} n="3" /></Slot>
                  <DeskEdge $w={2} />
                </Tray>
              </InnerBar>
            </Desktop>
          </VideoArea>
          <SeekRow>
            <Label w={28} size={11} color="#000">11:06</Label>
            <SeekTrack><SeekFill /></SeekTrack>
            <Label w={27} size={11} color="#000">54:10</Label>
          </SeekRow>
          <ControlRow>
            <ControlButton $big><Svg w={16} h={18} vb="0 0 16 18"><path d="M0 0h6v18H0zM10 0h6v18h-6z" fill="#707070" /></Svg></ControlButton>
            <ControlGroup><Ctl name="prev" /><Ctl name="stop" /><Ctl name="next" /></ControlGroup>
            <ControlGroup><Ctl name="full" /><Ctl name="eq" /></ControlGroup>
            <ControlGroup><Ctl name="list" /><Ctl name="loop" /><Ctl name="shuffle" on /></ControlGroup>
            <Volume>
              <Svg w={15} h={13} vb="0 0 15 13"><path d="M1 4h2l3-3v11L3 9H1z" fill="#777" /><path d="M8 3c1.500 2 1.500 5 0 7M10.500 1.500c2.500 3 2.500 7 0 10M13 .5c2.500 4 2.500 8 0 12" stroke="#f39a2c" strokeWidth="1.300" /></Svg>
              <VolumeScale>
                <Svg w={75} h={23} vb="0 0 75 23">
                  <defs><linearGradient id="vol"><stop offset="0" stopColor="#8fce8f" /><stop offset=".45" stopColor="#27c327" /><stop offset=".74" stopColor="#1fd01f" /><stop offset=".84" stopColor="#f2b01c" /><stop offset=".93" stopColor="#f0541c" /><stop offset="1" stopColor="#ee3a1c" /></linearGradient></defs>
                  <path d="M1 20 73.500 1v21H1z" fill="url(#vol)" stroke="#777" strokeWidth="1.500" strokeLinejoin="round" />
                </Svg>
                <Label w={25} size={9.5} ml={4} lh={13} color="#777">125%</Label>
              </VolumeScale>
              <Svg w={7} h={7} vb="0 0 7 7"><path d="M5 0h2v2H5zM5 4h2v2H5zM1 4h2v2H1z" fill="#bbb" /></Svg>
            </Volume>
          </ControlRow>
        </Player>
      </Upper>
      <Behind>
        <BehindCell $w={253} $pl={50}><Label w={117} size={12.5} lh={20} color="#5b5d63">What is inheritance?</Label></BehindCell>
        <RelatedCell><Label w={81} size={14.5} lh={16} color="#e010e0">Related stuff</Label></RelatedCell>
        <BehindCell $w={293} />
      </Behind>
      <OuterBar>
        <Slot $w={48}><Win s={18} /></Slot>
        <SearchBox $w={344} $pl={11}>
          <Magnifier s={18} c="#111" />
          <Label w={128} size={14} ml={10} lh={20} color="#333">Type here to search</Label>
          <Svg w={50} h={32} vb="0 0 50 32" style={{ marginLeft: 111 }}>
            <path d="M8 4 10 7l4-1-2 4 3 3-4 0-1 4-2-3-4 1 2-4-2-3 4 0z" fill="#ffc60b" /><circle cx="13" cy="3" r="1.200" fill="#ffc60b" /><circle cx="3" cy="13" r="1.200" fill="#ffc60b" />
            <path d="M1 26C6 12 16 10 24 19v7z" fill="#9be08d" />
            <rect x="21" y="6" width="23" height="22" rx="3" fill="#e7e8ea" /><path d="M21 11V8a4 4 0 0 1 4-4h15a4 4 0 0 1 4 4v3z" fill="#3f6fdb" /><path d="M27 1v6M38 1v6" stroke="#b7bac0" strokeWidth="2" />
            <path d="M42 32c-4-5-7-7-7-10a7 7 0 0 1 14 0c0 3-3 5-7 10z" fill="#ea5a17" /><circle cx="42" cy="22" r="2.700" fill="#fff" />
          </Svg>
        </SearchBox>
        <Slot $w={48}><Ring s={18} /></Slot>
        <Slot $w={50}><TaskView s={18} /></Slot>
        {outerApps.map(([Icon, s, u, bg, split], i) => (
          <AppSlot key={i} $w={49} $bg={bg}><Icon s={s} badge={i === 1 || undefined} />{u && <Underline $w={u} $split={split} />}</AppSlot>
        ))}
        <Tray>
          <Up s={14} />
          <Slot $w={34}><Svg s={16}><path d="M0 0h24v24H0z" fill="#1c66bd" /><path d="M12 5v14M5 12h14" stroke="#fff" strokeWidth="3" /></Svg></Slot>
          <Slot $w={18}><Wifi s={14} /></Slot>
          <TwoLines $w={24} $ml={6}><Label w={23} size={11.3} lh={17} color="#111">ENG</Label><Label w={12} size={11.3} lh={17} color="#111">IN</Label></TwoLines>
          <TwoLines $w={60} $ml={11}><Label w={28} size={11.3} lh={17} color="#111">17:39</Label><Label w={59} size={11.3} lh={17} color="#111">14-06-2022</Label></TwoLines>
          <Slot $w={54}><Notice s={26} n="2" /></Slot>
          <DeskEdge $w={5} />
        </Tray>
      </OuterBar>
    </Screen>
  );
}
